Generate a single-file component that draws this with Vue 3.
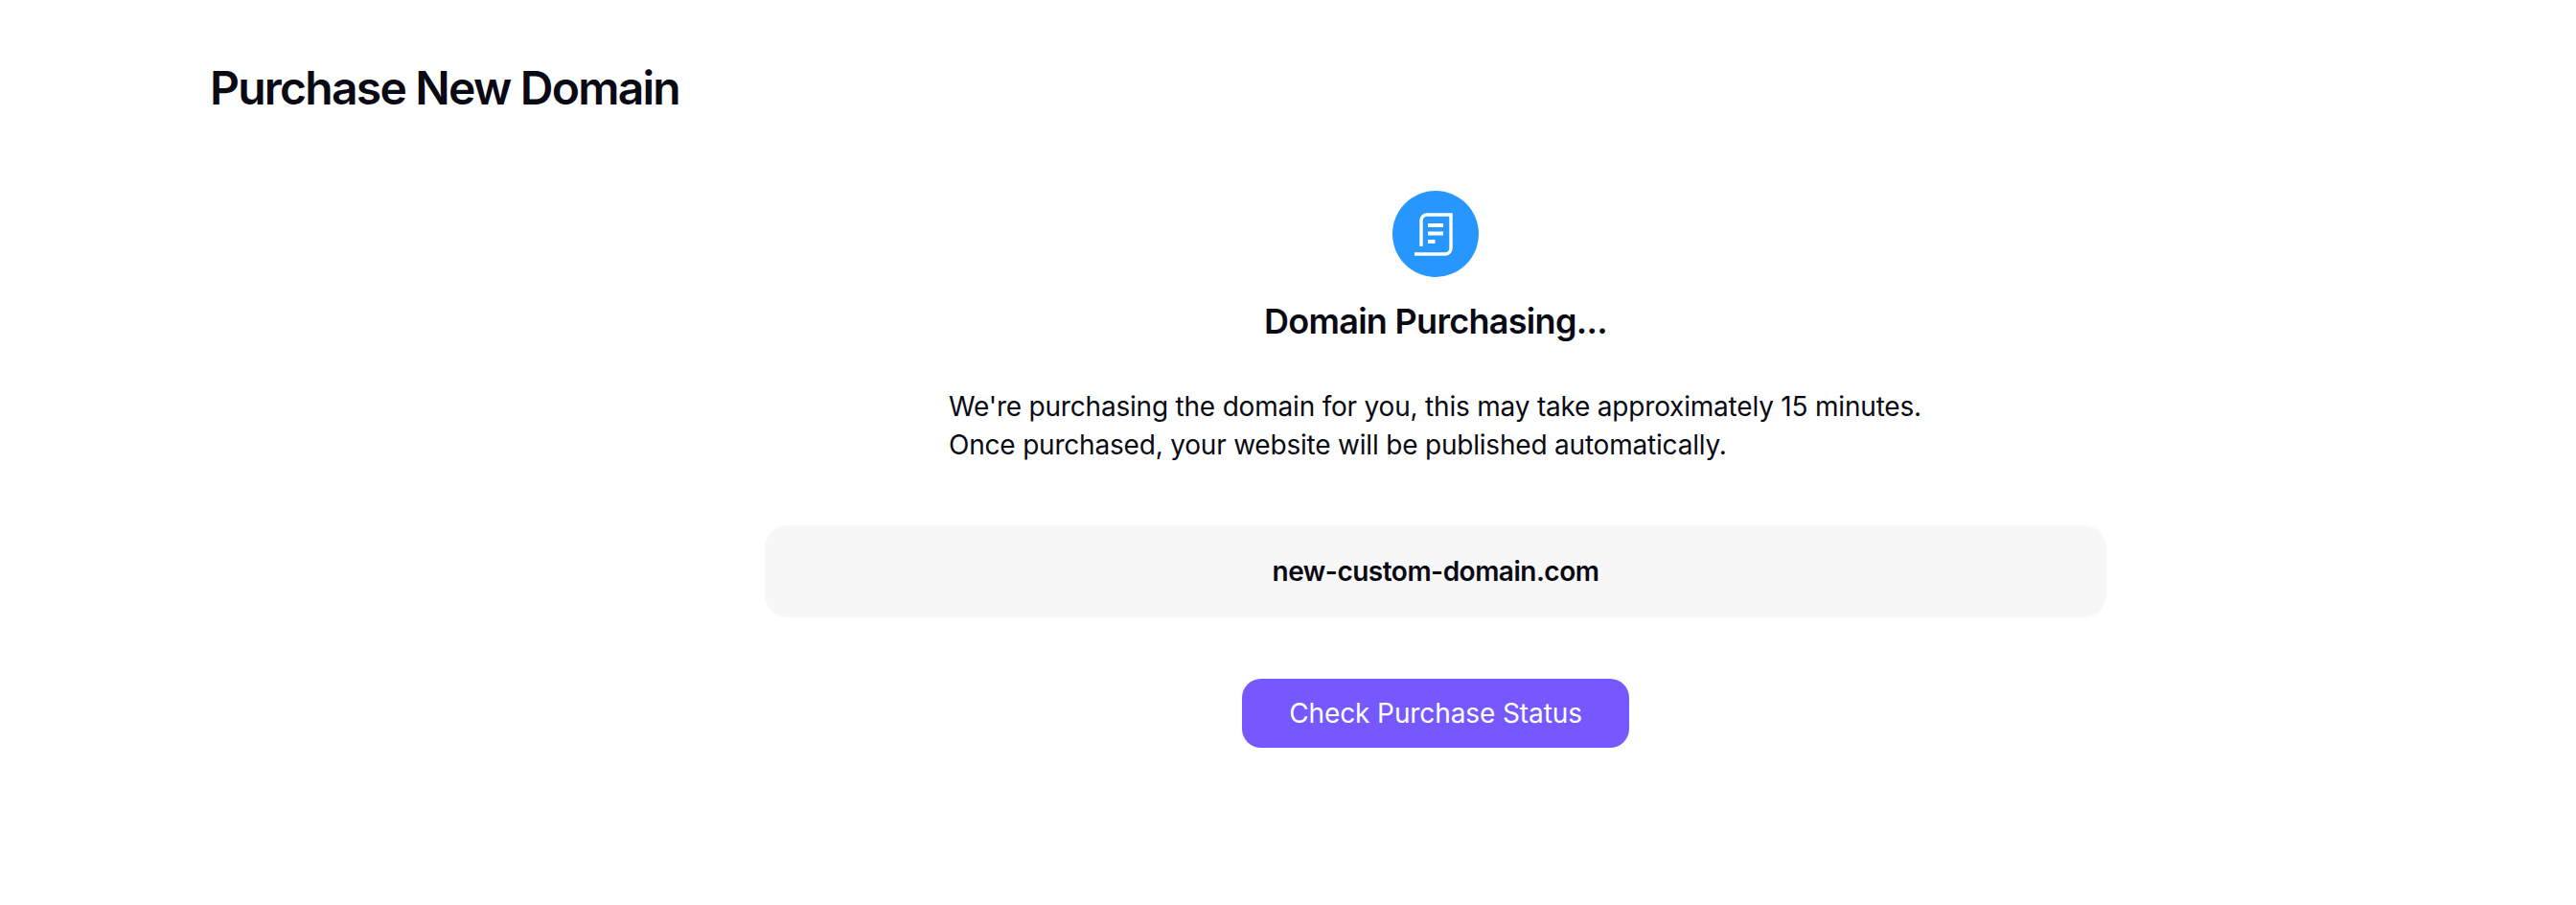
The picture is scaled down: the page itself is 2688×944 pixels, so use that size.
<script setup>
const domain = 'new-custom-domain.com';
</script>

<template>
  <div class="page">
    <h1 class="page__title">Purchase New Domain</h1>
    <section class="status">
      <span class="status__icon">
        <svg width="90" height="90" viewBox="0 0 90 90" fill="none" stroke="#fff" stroke-width="3.400">
          <path d="M30 58V31a6 6 0 0 1 6-6H61v35a6 6 0 0 1-6 6H23" />
          <path d="M37 36H53M37 44.500H53M37 53H44.500" stroke-width="4" />
        </svg>
      </span>
      <h2 class="status__title">Domain Purchasing...</h2>
      <p class="status__text">
        We're purchasing the domain for you, this may take approximately 15 minutes.<br />
        Once purchased, your website will be published automatically.
      </p>
      <div class="status__domain">{{ domain }}</div>
      <button class="status__btn" type="button">Check Purchase Status</button>
    </section>
  </div>
</template>

<style>
html,
body {
  background: #fff;
}
</style>

<style scoped>
.page {
  min-height: 944px;
  box-sizing: border-box;
  padding: 62px 0 0 219px;
  font-family: Inter, 'Liberation Sans', sans-serif;
  color: #0a0a14;
}

.page__title {
  margin: 0;
  font-size: 48px;
  line-height: 60px;
  font-weight: 600;
  letter-spacing: -1.75px;
}

.status {
  width: 1400px;
  margin: 77px 0 0 579px;
  display: flex;
  flex-direction: column;
  align-items: center;
}

.status__icon {
  width: 90px;
  height: 90px;
  border-radius: 50%;
  background: #2797ff;
  display: block;
}

.status__icon svg {
  display: block;
}

.status__title {
  margin: 23px 0 0;
  font-size: 36px;
  line-height: 46px;
  font-weight: 600;
  letter-spacing: -0.7px;
}

.status__text {
  width: 1016px;
  margin: 46px 0 0;
  font-size: 28px;
  line-height: 40px;
  font-weight: 400;
  letter-spacing: -0.2px;
  white-space: nowrap;
}

.status__domain {
  width: 100%;
  height: 96px;
  margin-top: 64px;
  border-radius: 24px;
  background: #f7f7f7;
  display: flex;
  align-items: center;
  justify-content: center;
  font-size: 28px;
  font-weight: 600;
  letter-spacing: -0.5px;
}

.status__btn {
  width: 404px;
  height: 72px;
  margin-top: 64px;
  border: 0;
  border-radius: 20px;
  background: #7559ff;
  color: #fff;
  font-family: inherit;
  font-size: 28px;
  font-weight: 400;
  letter-spacing: -0.1px;
}
</style>
